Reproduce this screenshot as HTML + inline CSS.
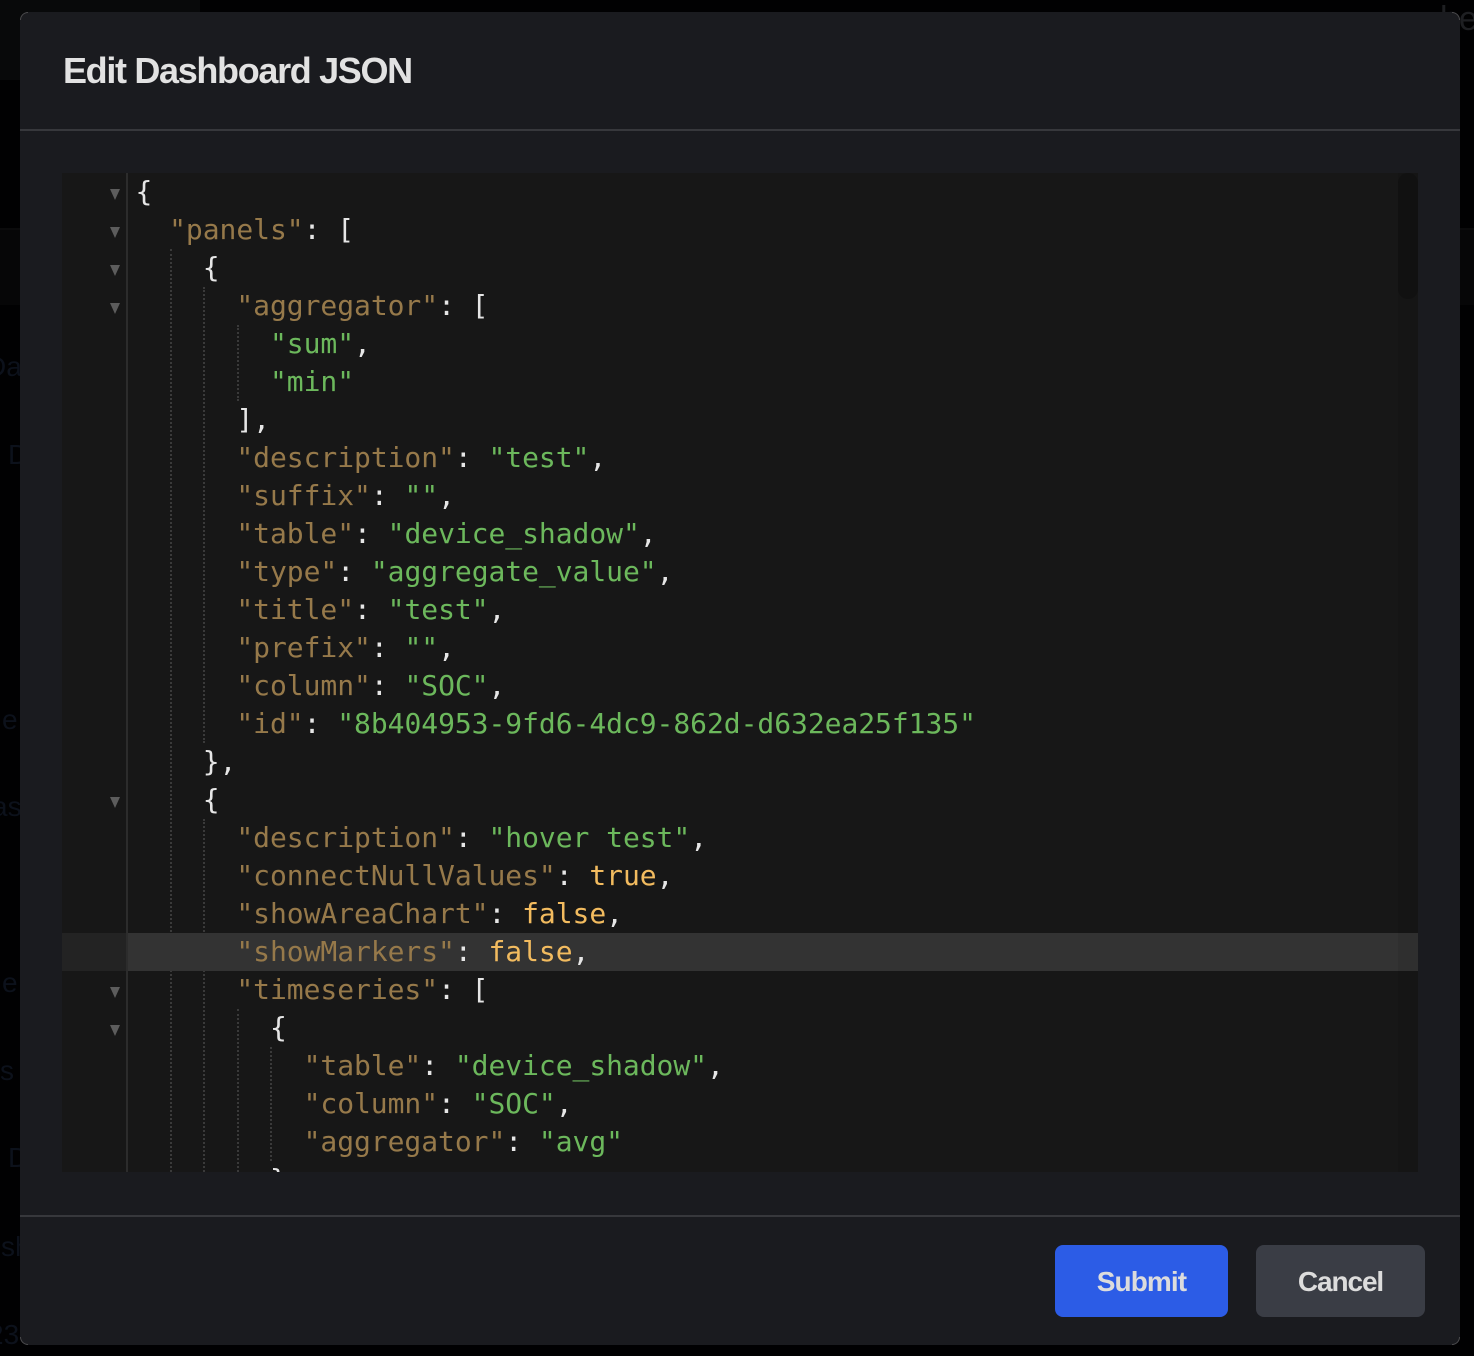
<!DOCTYPE html>
<html><head><meta charset="utf-8"><title>Edit Dashboard JSON</title>
<style>
html,body{margin:0;padding:0;width:1474px;height:1356px;overflow:hidden;background:#010102}
*{box-sizing:border-box}
.abs{position:absolute}
.g{position:absolute;font:28px/34px "Liberation Sans",sans-serif;color:#0c111b;white-space:nowrap}
#modal{position:absolute;left:20px;top:12px;width:1440px;height:1333px;background:#1a1b1f;border-radius:8px;overflow:hidden}
.hr{position:absolute;left:20px;width:1440px;height:2px;background:#37383c}
.c{position:absolute;width:8px;height:8px;border:0 solid #4a4a4c}
#title{position:absolute;left:63px;top:49px;font:bold 36px/44px "Liberation Sans",sans-serif;color:#e2e2e2;letter-spacing:-1.33px;white-space:nowrap}
#ed{position:absolute;left:62px;top:173px;width:1356px;height:999px;background:#171717;overflow:hidden}
#gut{position:absolute;left:0;top:0;width:64px;height:999px;background:#171717}
#gl{position:absolute;left:64px;top:0;width:2px;height:999px;background:#2c2c2c}
.hl{position:absolute;left:66px;top:760px;width:1290px;height:38px;background:#333333}
.hg{position:absolute;left:0;top:760px;width:64px;height:38px;background:#232323}
#sb{position:absolute;left:1336px;top:0;width:20px;height:999px;background:rgba(0,0,0,.07)}
#th{position:absolute;left:1336px;top:0;width:20px;height:126px;border-radius:10px;background:#111111}
.t{position:absolute;left:48px;width:0;height:0;border-left:5px solid transparent;border-right:5px solid transparent;border-top:11px solid #5c5c5c}
.i{position:absolute;width:0;border-left:2px dotted #3a3a3a}
pre{position:absolute;left:73.5px;top:0;margin:0;font:28px/38px "DejaVu Sans Mono","Liberation Mono",monospace;color:#e6e6e6;white-space:pre;letter-spacing:-.05px}
.k{color:#96794a}.s{color:#6cb85c}.b{color:#f2bb5f}
.btn{position:absolute;top:1245px;height:72px;border-radius:8px;font:bold 28px/74px "Liberation Sans",sans-serif;color:#dcdcdc;text-align:center}
</style></head><body>
<div class="abs" style="left:0;top:0;width:200px;height:80px;background:#08090a"></div>
<div class="abs" style="left:0;top:230px;width:20px;height:75px;background:#060607"></div>
<div class="abs" style="left:1460px;top:230px;width:14px;height:75px;background:#060607"></div>
<div class="g" style="left:-14px;top:350px">Da</div>
<div class="g" style="left:8px;top:438px">D</div>
<div class="g" style="left:2px;top:703px">e</div>
<div class="g" style="left:-8px;top:790px">as</div>
<div class="g" style="left:2px;top:966px">e</div>
<div class="g" style="left:0;top:1054px">s</div>
<div class="g" style="left:8px;top:1141px">D</div>
<div class="g" style="left:1px;top:1230px">sh</div>
<div class="g" style="left:-12px;top:1318px">23</div>
<div class="g" style="left:1440px;top:2px;color:#1e1f22;font-size:34px">be</div>
<div class="abs" style="left:0;top:228px;width:20px;height:2px;background:#0b0b0c"></div>
<div class="abs" style="left:1460px;top:228px;width:14px;height:2px;background:#0b0b0c"></div>
<div id="modal"></div>
<div class="c" style="left:20px;top:12px;border-top-width:1px;border-left-width:1px;border-top-left-radius:8px"></div>
<div class="c" style="left:1452px;top:12px;border-top-width:1px;border-right-width:1px;border-top-right-radius:8px"></div>
<div class="c" style="left:20px;top:1337px;border-bottom-width:1px;border-left-width:1px;border-bottom-left-radius:8px"></div>
<div class="c" style="left:1452px;top:1337px;border-bottom-width:1px;border-right-width:1px;border-bottom-right-radius:8px"></div>
<div class="hr" style="top:129px"></div>
<div class="hr" style="top:1215px"></div>
<div id="title">Edit Dashboard JSON</div>
<div id="ed">
<div id="gut"></div>
<div class="i" style="left:108px;top:76px;height:923px"></div>
<div class="i" style="left:141px;top:114px;height:456px"></div>
<div class="i" style="left:141px;top:646px;height:353px"></div>
<div class="i" style="left:175px;top:152px;height:76px"></div>
<div class="i" style="left:175px;top:836px;height:163px"></div>
<div class="i" style="left:208px;top:874px;height:114px"></div>
<div class="hg"></div><div class="hl"></div>
<div id="gl"></div>
<div id="sb"></div><div id="th"></div>
<div class="t" style="top:16px"></div>
<div class="t" style="top:54px"></div>
<div class="t" style="top:92px"></div>
<div class="t" style="top:130px"></div>
<div class="t" style="top:624px"></div>
<div class="t" style="top:814px"></div>
<div class="t" style="top:852px"></div>
<pre>{
  <span class="k">"panels"</span>: [
    {
      <span class="k">"aggregator"</span>: [
        <span class="s">"sum"</span>,
        <span class="s">"min"</span>
      ],
      <span class="k">"description"</span>: <span class="s">"test"</span>,
      <span class="k">"suffix"</span>: <span class="s">""</span>,
      <span class="k">"table"</span>: <span class="s">"device_shadow"</span>,
      <span class="k">"type"</span>: <span class="s">"aggregate_value"</span>,
      <span class="k">"title"</span>: <span class="s">"test"</span>,
      <span class="k">"prefix"</span>: <span class="s">""</span>,
      <span class="k">"column"</span>: <span class="s">"SOC"</span>,
      <span class="k">"id"</span>: <span class="s">"8b404953-9fd6-4dc9-862d-d632ea25f135"</span>
    },
    {
      <span class="k">"description"</span>: <span class="s">"hover test"</span>,
      <span class="k">"connectNullValues"</span>: <span class="b">true</span>,
      <span class="k">"showAreaChart"</span>: <span class="b">false</span>,
      <span class="k">"showMarkers"</span>: <span class="b">false</span>,
      <span class="k">"timeseries"</span>: [
        {
          <span class="k">"table"</span>: <span class="s">"device_shadow"</span>,
          <span class="k">"column"</span>: <span class="s">"SOC"</span>,
          <span class="k">"aggregator"</span>: <span class="s">"avg"</span>
        }
</pre>
</div>
<div class="btn" style="left:1055px;width:173px;background:#2c5ce6;letter-spacing:-.9px">Submit</div>
<div class="btn" style="left:1256px;width:169px;background:#3a3d45;letter-spacing:-1.1px">Cancel</div>
</body></html>
